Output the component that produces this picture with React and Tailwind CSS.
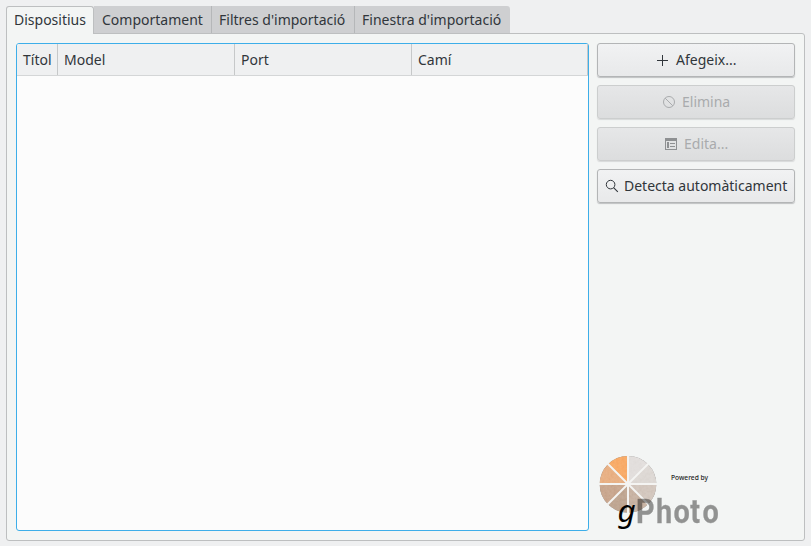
import React from "react";

const tabs = [
  { label: "Comportament", cls: "w-[118px] border-r border-[#b5b7b9] pl-2" },
  { label: "Filtres d'importació", cls: "w-[143px] border-r border-[#b5b7b9] pl-[7px]" },
  { label: "Finestra d'importació", cls: "w-[155px] rounded-tr-[3px] pl-[7px]" },
];

const columns = [
  { label: "Títol", cls: "w-[41px] border-r" },
  { label: "Model", cls: "w-[177px] border-r" },
  { label: "Port", cls: "w-[177px] border-r" },
  { label: "Camí", cls: "w-[176px] border-r" },
];

function PlusIcon() {
  return (
    <svg width="16" height="16" viewBox="0 0 16 16" className="shrink-0" shapeRendering="crispEdges">
      <path d="M8 3h1v5h5v1H9v5H8V9H3V8h5z" fill="#31363b" />
    </svg>
  );
}

function ForbiddenIcon() {
  return (
    <svg width="16" height="16" viewBox="0 0 16 16" className="shrink-0" fill="none" stroke="#aaacae">
      <circle cx="8" cy="8" r="5.5" />
      <path d="M4.1 4.1l7.8 7.8" />
    </svg>
  );
}

function EditIcon() {
  return (
    <svg width="16" height="16" viewBox="0 0 16 16" className="shrink-0" fill="#8e9092" shapeRendering="crispEdges">
      <path fillRule="evenodd" d="M2 2h12v12H2zM3 5v8h10V5z" />
      <path d="M4 6h2v6H4zM7 7h5v1H7zM7 10h5v1H7z" />
    </svg>
  );
}

function SearchIcon() {
  return (
    <svg width="16" height="16" viewBox="0 0 16 16" className="shrink-0" fill="none" stroke="#31363b">
      <circle cx="6.6" cy="6.6" r="4.3" />
      <path d="M9.6 9.6l4.2 4.2" strokeWidth="1.1" />
    </svg>
  );
}

function Button({ icon, children, disabled, className }) {
  const look = disabled
    ? "border-[#cccece] bg-linear-to-b from-[#e6e7e8] to-[#dcddde] text-[#a9abad] shadow-[0_1px_1px_#d8dada]"
    : "border-[#b3b5b6] bg-linear-to-b from-[#f1f2f3] to-[#e8e9ea] text-[#31363b] shadow-[0_1px_1px_#bfc1c2]";
  return (
    <button
      disabled={disabled}
      className={`mr-px flex h-[34px] w-[198px] items-center rounded-[3px] border pb-px ${look} ${className}`}
    >
      {icon}
      <span className="ml-[5px] whitespace-nowrap">{children}</span>
    </button>
  );
}

const slices = ["#e2dedc", "#ddd8d4", "#d3c7be", "#c8b3a3", "#bfa692", "#c9a78f", "#e8b084", "#f8ab68"];

const word = [
  { ch: "P", x: 636 },
  { ch: "h", x: 656 },
  { ch: "o", x: 673.6 },
  { ch: "t", x: 690.2 },
  { ch: "o", x: 702.4 },
];

function Logo() {
  return (
    <svg width="126" height="84" viewBox="597 451 126 84" className="mt-auto overflow-visible" role="img" aria-label="gPhoto">
      <defs>
        <filter id="peel" x="0" y="0" width="1" height="1" colorInterpolationFilters="sRGB">
          <feTurbulence type="fractalNoise" baseFrequency="0.35" numOctaves="2" seed="4" />
          <feColorMatrix values="0.2 0 0 0 0.41 0.2 0 0 0 0.41 0.2 0 0 0 0.41 0 0 0 0 1" />
          <feComposite in2="SourceGraphic" operator="in" result="n" />
          <feBlend in="n" in2="SourceGraphic" mode="soft-light" />
        </filter>
      </defs>
      <g transform="translate(628 484.3)" filter="url(#peel)">
        {slices.map((fill, i) => (
          <path key={i} d="M0 0V-28.3A28.3 28.3 0 0 1 20.01 -20.01Z" transform={`rotate(${i * 45})`} fill={fill} />
        ))}
      </g>
      <path
        d="M628 455v58M599 484h58M607.5 463.5l41 41M648.5 463.5l-41 41"
        stroke="#f4f4f2"
        strokeWidth="2"
      />
      <g fontFamily="Roboto" fontWeight="700" fontSize="34" fill="#000" stroke="#000" strokeWidth="0.3" opacity="0.4">
        {word.map(({ ch, x }) => (
          <text key={x} transform={`translate(${x} 523) scale(0.85 1)`}>
            {ch}
          </text>
        ))}
      </g>
      <text x="617.5" y="521.5" fontFamily="Noto Sans" fontStyle="italic" fontSize="31.5" fill="#000">
        g
      </text>
      <text
        x="671"
        y="480"
        fontFamily="Noto Sans"
        fontWeight="500"
        fontSize="7.2"
        textLength="37"
        lengthAdjust="spacingAndGlyphs"
        fill="#222"
      >
        Powered by
      </text>
    </svg>
  );
}

export default function App() {
  return (
    <div className="flex h-[546px] w-[811px] flex-col bg-[#eff0f1] pt-1.5 pr-1.5 pb-[5px] pl-1.5 font-['Noto_Sans',sans-serif] text-[14px] leading-5 text-[#31363b]">
      <nav className="flex h-[27px]">
        <div className="z-10 -mb-px h-7 w-[88px] rounded-t-[3px] border border-b-0 border-[#bdbfc0] bg-[#f3f5f4] pt-[3px] pl-[7px] whitespace-nowrap">
          Dispositius
        </div>
        {tabs.map((t) => (
          <div key={t.label} className={`bg-[#cecfd1] pt-1 whitespace-nowrap ${t.cls}`}>
            {t.label}
          </div>
        ))}
      </nav>
      <main className="flex h-[508px] gap-2 rounded-[3px] rounded-tl-none border border-[#bdbfc0] bg-[#f3f5f4] p-[9px]">
        <section className="h-[488px] w-[573px] rounded-[3px] border border-[#3daee9] bg-[#fcfcfc]">
          <div className="flex h-8 rounded-t-[2px] border-b border-[#d4d6d7] bg-[#eff0f1]">
            {columns.map((c) => (
              <div key={c.label} className={`border-[#c6c8c9] pt-[6px] pl-1.5 ${c.cls}`}>
                {c.label}
              </div>
            ))}
          </div>
        </section>
        <aside className="flex h-[492px] flex-col gap-2">
          <Button icon={<PlusIcon />} className="pl-[56px]">
            <span className="pl-px">Afegeix...</span>
          </Button>
          <Button icon={<ForbiddenIcon />} className="pl-[63px]" disabled>Elimina</Button>
          <Button icon={<EditIcon />} className="pl-[65px]" disabled>Edita...</Button>
          <Button icon={<SearchIcon />} className="pl-[6px]">
            <span className="-ml-px">Detecta automàticament</span>
          </Button>
          <Logo />
        </aside>
      </main>
    </div>
  );
}
